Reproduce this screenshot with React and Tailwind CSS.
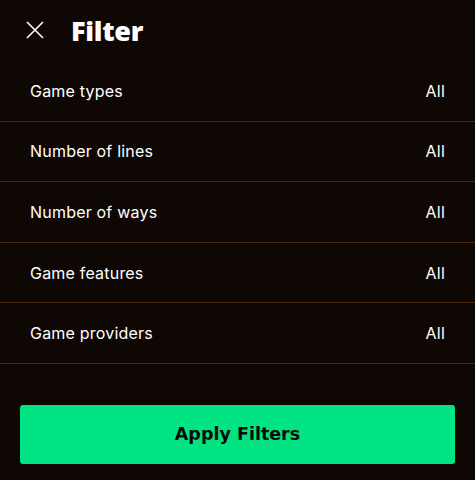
const rows = [
  "Game types",
  "Number of lines",
  "Number of ways",
  "Game features",
  "Game providers",
];

export default function App() {
  return (
    <div className="w-[475px] h-[480px] bg-[#0f0704] text-white font-['Inter',sans-serif] flex flex-col">
      {/* Header */}
      <div className="h-[61px] flex items-center pl-[26px] pb-[1px]">
        <svg width="18" height="18" viewBox="0 0 18 18" className="shrink-0">
          <path d="M1 1L17 17M17 1L1 17" stroke="white" strokeWidth="1.6" />
        </svg>
        <h1 className="ml-[27px] font-['Open_Sans',sans-serif] text-[27px] font-extrabold tracking-[-0.3px] leading-none">
          Filter
        </h1>
      </div>

      {/* Rows */}
      <div className="flex flex-col">
        {rows.map((label) => (
          <div
            key={label}
            className="h-[60.6px] flex items-center justify-between px-[30px] border-b border-[#4a2a10] text-[16px] tracking-[0.2px]"
          >
            <span>{label}</span>
            <span>All</span>
          </div>
        ))}
      </div>

      {/* Apply button */}
      <div className="px-[20px] pt-[41px]">
        <button className="w-full h-[59px] rounded-[3px] bg-[#00e483] text-[#0a0a0a] font-['DejaVu_Sans',sans-serif] font-bold text-[17.5px]">
          Apply Filters
        </button>
      </div>
    </div>
  );
}
